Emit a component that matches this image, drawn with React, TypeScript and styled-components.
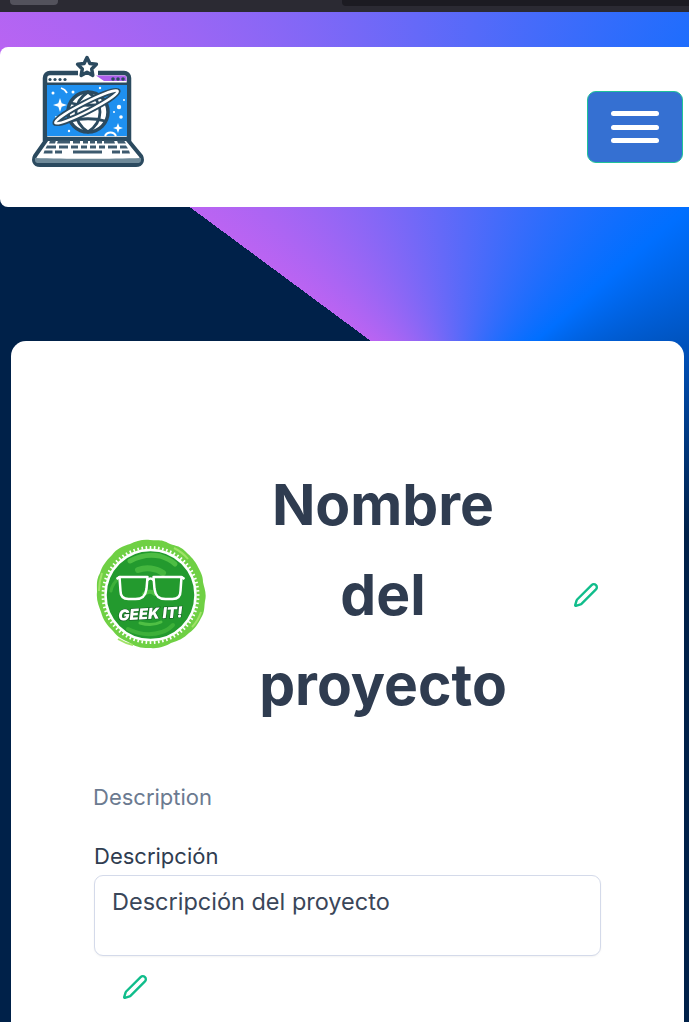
import React from "react";
import styled, { createGlobalStyle } from "styled-components";

const GlobalStyle = createGlobalStyle`
  html, body {
    margin: 0;
    padding: 0;
    height: 100%;
    overflow: hidden;
    font-family: Inter, "Liberation Sans", sans-serif;
  }
  * {
    box-sizing: border-box;
  }
`;

const Page = styled.div`
  height: 1022px;
  overflow: hidden;
  background: conic-gradient(
    from 306.5deg at 460px 407px,
    #bb64f2 0deg,
    #006fff 102.4deg,
    #002149 173deg,
    #002149 360deg
  );
`;

const BrowserBar = styled.div`
  height: 12px;
  padding-left: 10px;
  display: flex;
  justify-content: space-between;
  align-items: flex-start;
  background: #2b2a33;
`;

const BrowserTab = styled.div`
  width: 48px;
  height: 5px;
  border-radius: 0 0 4px 4px;
  background: #53525c;
`;

const BrowserSlot = styled.div`
  width: 347px;
  height: 6px;
  border-radius: 0 0 0 4px;
  background: #1c1b22;
`;

const Header = styled.header`
  height: 160px;
  margin: 35px -20px 134px 0;
  padding: 8px 26px 0 32px;
  display: flex;
  justify-content: space-between;
  align-items: flex-start;
  background: #fff;
  border-radius: 8px;
`;

const MenuButton = styled.button`
  width: 96px;
  height: 72px;
  margin-top: 36px;
  display: flex;
  flex-direction: column;
  justify-content: center;
  align-items: center;
  gap: 8.5px;
  background: #3570d2;
  border: 1.5px solid #1fc29a;
  border-radius: 9px;
`;

const MenuLine = styled.span`
  width: 48px;
  height: 5px;
  border-radius: 3px;
  background: #fff;
`;

const Card = styled.main`
  margin: 0 5px 0 11px;
  padding: 119px 83px 0;
  height: 700px;
  background: #fff;
  border-radius: 15px;
`;

const TitleRow = styled.div`
  display: flex;
  align-items: center;
`;

const Title = styled.h1`
  width: 272px;
  margin: 0 0 0 40px;
  font-size: 57px;
  line-height: 90px;
  font-weight: 700;
  text-align: center;
  color: #2f3c50;
`;

const EditIcon = styled.svg<{ $inset?: number }>`
  width: 26px;
  height: 26px;
  margin-left: ${(p) => p.$inset ?? 0}px;
  display: block;
  flex: none;
  fill: none;
  stroke: #10bd8b;
  stroke-width: 2.2;
  stroke-linecap: round;
  stroke-linejoin: round;
`;

const SectionName = styled.p`
  margin: 49px 0 0 -1px;
  font-size: 22px;
  line-height: 36px;
  color: #6b7a90;
`;

const Field = styled.label`
  display: block;
  margin-top: 23px;
  font-size: 22px;
  line-height: 36px;
  color: #2f3c50;
`;

const Textarea = styled.textarea`
  display: block;
  width: 507px;
  height: 81px;
  margin-top: 1px;
  padding: 8px 17px;
  font-family: inherit;
  font-size: 23.5px;
  line-height: 36px;
  color: #3a4659;
  background: #fff;
  border: 1.5px solid #d4daea;
  border-radius: 9px;
  box-shadow: 0 1px 2px rgba(0, 0, 0, 0.05);
  resize: none;
  outline: none;
`;

const FieldActions = styled.div`
  margin-top: 18px;
`;

const LogoBox = styled.div`
  flex: none;
  display: flex;
  filter: blur(0.4px);
`;

const Pencil: React.FC<{ inset?: number }> = ({ inset }) => (
  <EditIcon viewBox="0 0 24 24" $inset={inset}>
    <path d="M21.174 6.812a1 1 0 0 0-3.986-3.987L3.842 16.174a2 2 0 0 0-.5.83l-1.321 4.352a.5.5 0 0 0 .623.622l4.353-1.32a2 2 0 0 0 .83-.497z" />
  </EditIcon>
);

const LaptopLogo = () => (
  <LogoBox>
    <svg width="112" height="112" viewBox="0 0 112 112">
      <path
        d="M46 18H18a5 5 0 0 0-5 5v61h84V23a5 5 0 0 0-5-5H66"
        fill="#fff"
        stroke="#2b4a5f"
        strokeWidth="4.5"
      />
      <path d="M64 20.500h28a2.500 2.500 0 0 1 2.500 2.500v3H72z" fill="#ad5fee" />
      <rect x="13" y="27.500" width="84" height="3" fill="#2b4a5f" />
      <rect x="15" y="30" width="80" height="51" fill="#1e90f0" />
      <g fill="#2b4a5f">
        <circle cx="18" cy="24.500" r="1.600" />
        <circle cx="23" cy="24.500" r="1.600" />
        <circle cx="28" cy="24.500" r="1.600" />
        <circle cx="33" cy="24.500" r="1.600" />
        <circle cx="81" cy="24" r="1.800" />
        <circle cx="86" cy="24" r="1.800" />
        <circle cx="91" cy="24" r="1.800" />
      </g>
      <path
        d="M55 2.500l2.900 5.900 6.500.9-4.700 4.600 1.100 6.500-5.800-3.100-5.800 3.100 1.100-6.500-4.700-4.600 6.500-.9z"
        fill="#fff"
        stroke="#2b4a5f"
        strokeWidth="3.500"
        strokeLinejoin="round"
      />
      <g fill="#fff">
        <path d="M28 43l1.700 5.300 5.300 1.700-5.300 1.700-1.700 5.300-1.700-5.300-5.300-1.700 5.300-1.700z" />
        <path d="M86 68l1.300 3.700 3.700 1.300-3.700 1.300-1.300 3.700-1.300-3.700-3.700-1.300 3.700-1.300z" />
        <circle cx="87" cy="52" r="2.200" />
        <circle cx="89" cy="62" r="1.800" />
        <circle cx="21" cy="38" r="1.500" />
        <circle cx="41" cy="37" r="1.500" />
        <circle cx="68" cy="33" r="1.200" />
        <circle cx="92" cy="45" r="1" />
        <circle cx="82" cy="57" r="1" />
        <circle cx="24" cy="62" r="1" />
        <circle cx="37" cy="76" r="1.200" />
        <path d="M29 33c3 1 5 3 6 5" stroke="#fff" strokeWidth="1.800" fill="none" />
        <path d="M73 81a6 6 0 0 1 11 0" stroke="#fff" strokeWidth="2" fill="none" />
      </g>
      <circle cx="56" cy="57" r="20" fill="#fff" stroke="#2b4a5f" strokeWidth="3.500" />
      <g fill="none" stroke="#2b4a5f" strokeWidth="2.800">
        <path d="M56 37c-9 6-12 13-12 20s3 14 12 20c9-6 12-13 12-20s-3-14-12-20z" />
        <path d="M39 48c10 3 24 3 34 0M39 66c10-3 24-3 34 0" />
      </g>
      <ellipse
        cx="54.500"
        cy="52"
        rx="35"
        ry="4.500"
        transform="rotate(-27 54.500 52)"
        fill="none"
        stroke="#2b4a5f"
        strokeWidth="6"
      />
      <ellipse
        cx="54.500"
        cy="52"
        rx="35"
        ry="4.500"
        transform="rotate(-27 54.500 52)"
        fill="none"
        stroke="#fff"
        strokeWidth="2.400"
      />
      <path
        d="M15 84h80l14 17c2 4 1 9-5 9H8c-6 0-7-5-5-9z"
        fill="#fff"
        stroke="#2b4a5f"
        strokeWidth="4"
        strokeLinejoin="round"
      />
      <path d="M3 103c30 1 76 1 106 0v2a3 3 0 0 1-3 3H6a3 3 0 0 1-3-3z" fill="#6f8a99" />
      <g fill="#3d5a6e">
        <path d="M18 85.500h6l-1 3h-6zM26 85.500h12v3H25zM41 85.500h7v3h-7zM51 85.500h5v3h-5zM58 85.500h5v3h-5zM65 85.500h5v3h-5zM72 85.500h10l1 3H72zM85 85.500h7l2 3h-8z" />
        <path d="M15 90.500h9v3H13.500zM27 90.500h9v3h-9zM39 90.500h7v3h-7zM49 90.500h6v3h-6zM58 90.500h6v3h-6zM67 90.500h6v3h-6zM76 90.500h9v3h-9zM88 90.500h6l2 3h-8z" />
        <path d="M12.500 95.500h8v3h-9zM23 95.500h7v3h-7zM41 95.500h29v3H41zM80 95.500h8v3h-8zM90 95.500h7l1 3h-8z" />
      </g>
    </svg>
  </LogoBox>
);

const serration = Array.from({ length: 72 }, (_, i) => i * 5);

const GeekLogo = () => (
  <LogoBox>
    <svg width="113" height="113" viewBox="0 0 113 113">
      <path
        d="M56 1c7 1 11-1 18 3 6 3 11 2 17 8 4 4 8 7 12 14 3 6 6 10 6 17 1 6 4 11 2 19-1 6 0 11-4 17-3 6-6 11-12 15-5 5-11 8-18 10-5 3-13 6-20 5-8 0-13 0-21-5-6-3-13-6-17-12-6-6-10-11-12-19-2-6-5-12-4-20 0-7-1-12 3-19 2-7 6-12 12-18 4-6 11-9 18-11 6-3 13-5 20-4z"
        fill="#6fd044"
      />
      <g fill="none" stroke="#a0e368" strokeWidth="2">
        <path d="M8 34c-2 6-3 12-3 18M24 100c5 3 10 5 15 6M98 88c4-4 7-9 9-15M80 9c6 3 10 6 14 11" />
      </g>
      <circle cx="56.500" cy="56" r="45" fill="#239a2e" stroke="#fff" strokeWidth="2.500" />
      <g stroke="#fff" strokeWidth="1.600">
        {serration.map((deg) => (
          <line key={deg} x1="56.500" y1="10" x2="56.500" y2="7" transform={`rotate(${deg} 56.500 56)`} />
        ))}
      </g>
      <g fill="none" strokeLinecap="round">
        <path d="M36 22c9-5 20-7 30-5 6 2 11 4 15 8" stroke="#58c648" strokeWidth="5" opacity="0.8" />
        <path d="M44 31c8-3 18-2 25 3" stroke="#4cbd42" strokeWidth="6" opacity="0.8" />
        <path d="M17 52c1-6 4-10 9-14" stroke="#43b53c" strokeWidth="3" opacity="0.8" />
        <path d="M50 55c4-3 8-3 11 0" stroke="#4cbd42" strokeWidth="4" />
        <path d="M34 90c10 5 22 7 34 3 4-1 8-4 11-7" stroke="#43b53c" strokeWidth="4" opacity="0.8" />
        <path d="M46 84c7 2 15 2 21-1" stroke="#5ac84a" strokeWidth="3" opacity="0.8" />
      </g>
      <g fill="none" stroke="#fff" strokeWidth="2.500" strokeLinejoin="round" transform="translate(1.500 0)">
        <path d="M24 38h28l-1 12c-1 7-4 10-11 10h-7c-6 0-8-3-8-8z" />
        <path d="M86 38H58l1 12c1 7 4 10 11 10h7c6 0 8-3 8-8z" />
        <path d="M52 41c2-2 4-2 6 0M24 38l-3 2M86 38l3 2" />
      </g>
      <text
        x="56.500"
        y="80"
        textAnchor="middle"
        transform="rotate(-3 56.500 76)"
        fontFamily="Inter, 'Liberation Sans', sans-serif"
        fontSize="15"
        fontWeight="900"
        fontStyle="italic"
        fill="#fff"
        stroke="#155f26"
        strokeWidth="1.200"
        paintOrder="stroke"
      >
        GEEK IT!
      </text>
    </svg>
  </LogoBox>
);

const App: React.FC = () => (
  <>
    <GlobalStyle />
    <Page>
      <BrowserBar>
        <BrowserTab />
        <BrowserSlot />
      </BrowserBar>
      <Header>
        <LaptopLogo />
        <MenuButton aria-label="menu">
          <MenuLine />
          <MenuLine />
          <MenuLine />
        </MenuButton>
      </Header>
      <Card>
        <TitleRow>
          <GeekLogo />
          <Title>Nombre del proyecto</Title>
          <Pencil inset={54} />
        </TitleRow>
        <SectionName>Description</SectionName>
        <Field>
          Descripción
          <Textarea defaultValue="Descripción del proyecto" />
        </Field>
        <FieldActions>
          <Pencil inset={28} />
        </FieldActions>
      </Card>
    </Page>
  </>
);

export default App;
